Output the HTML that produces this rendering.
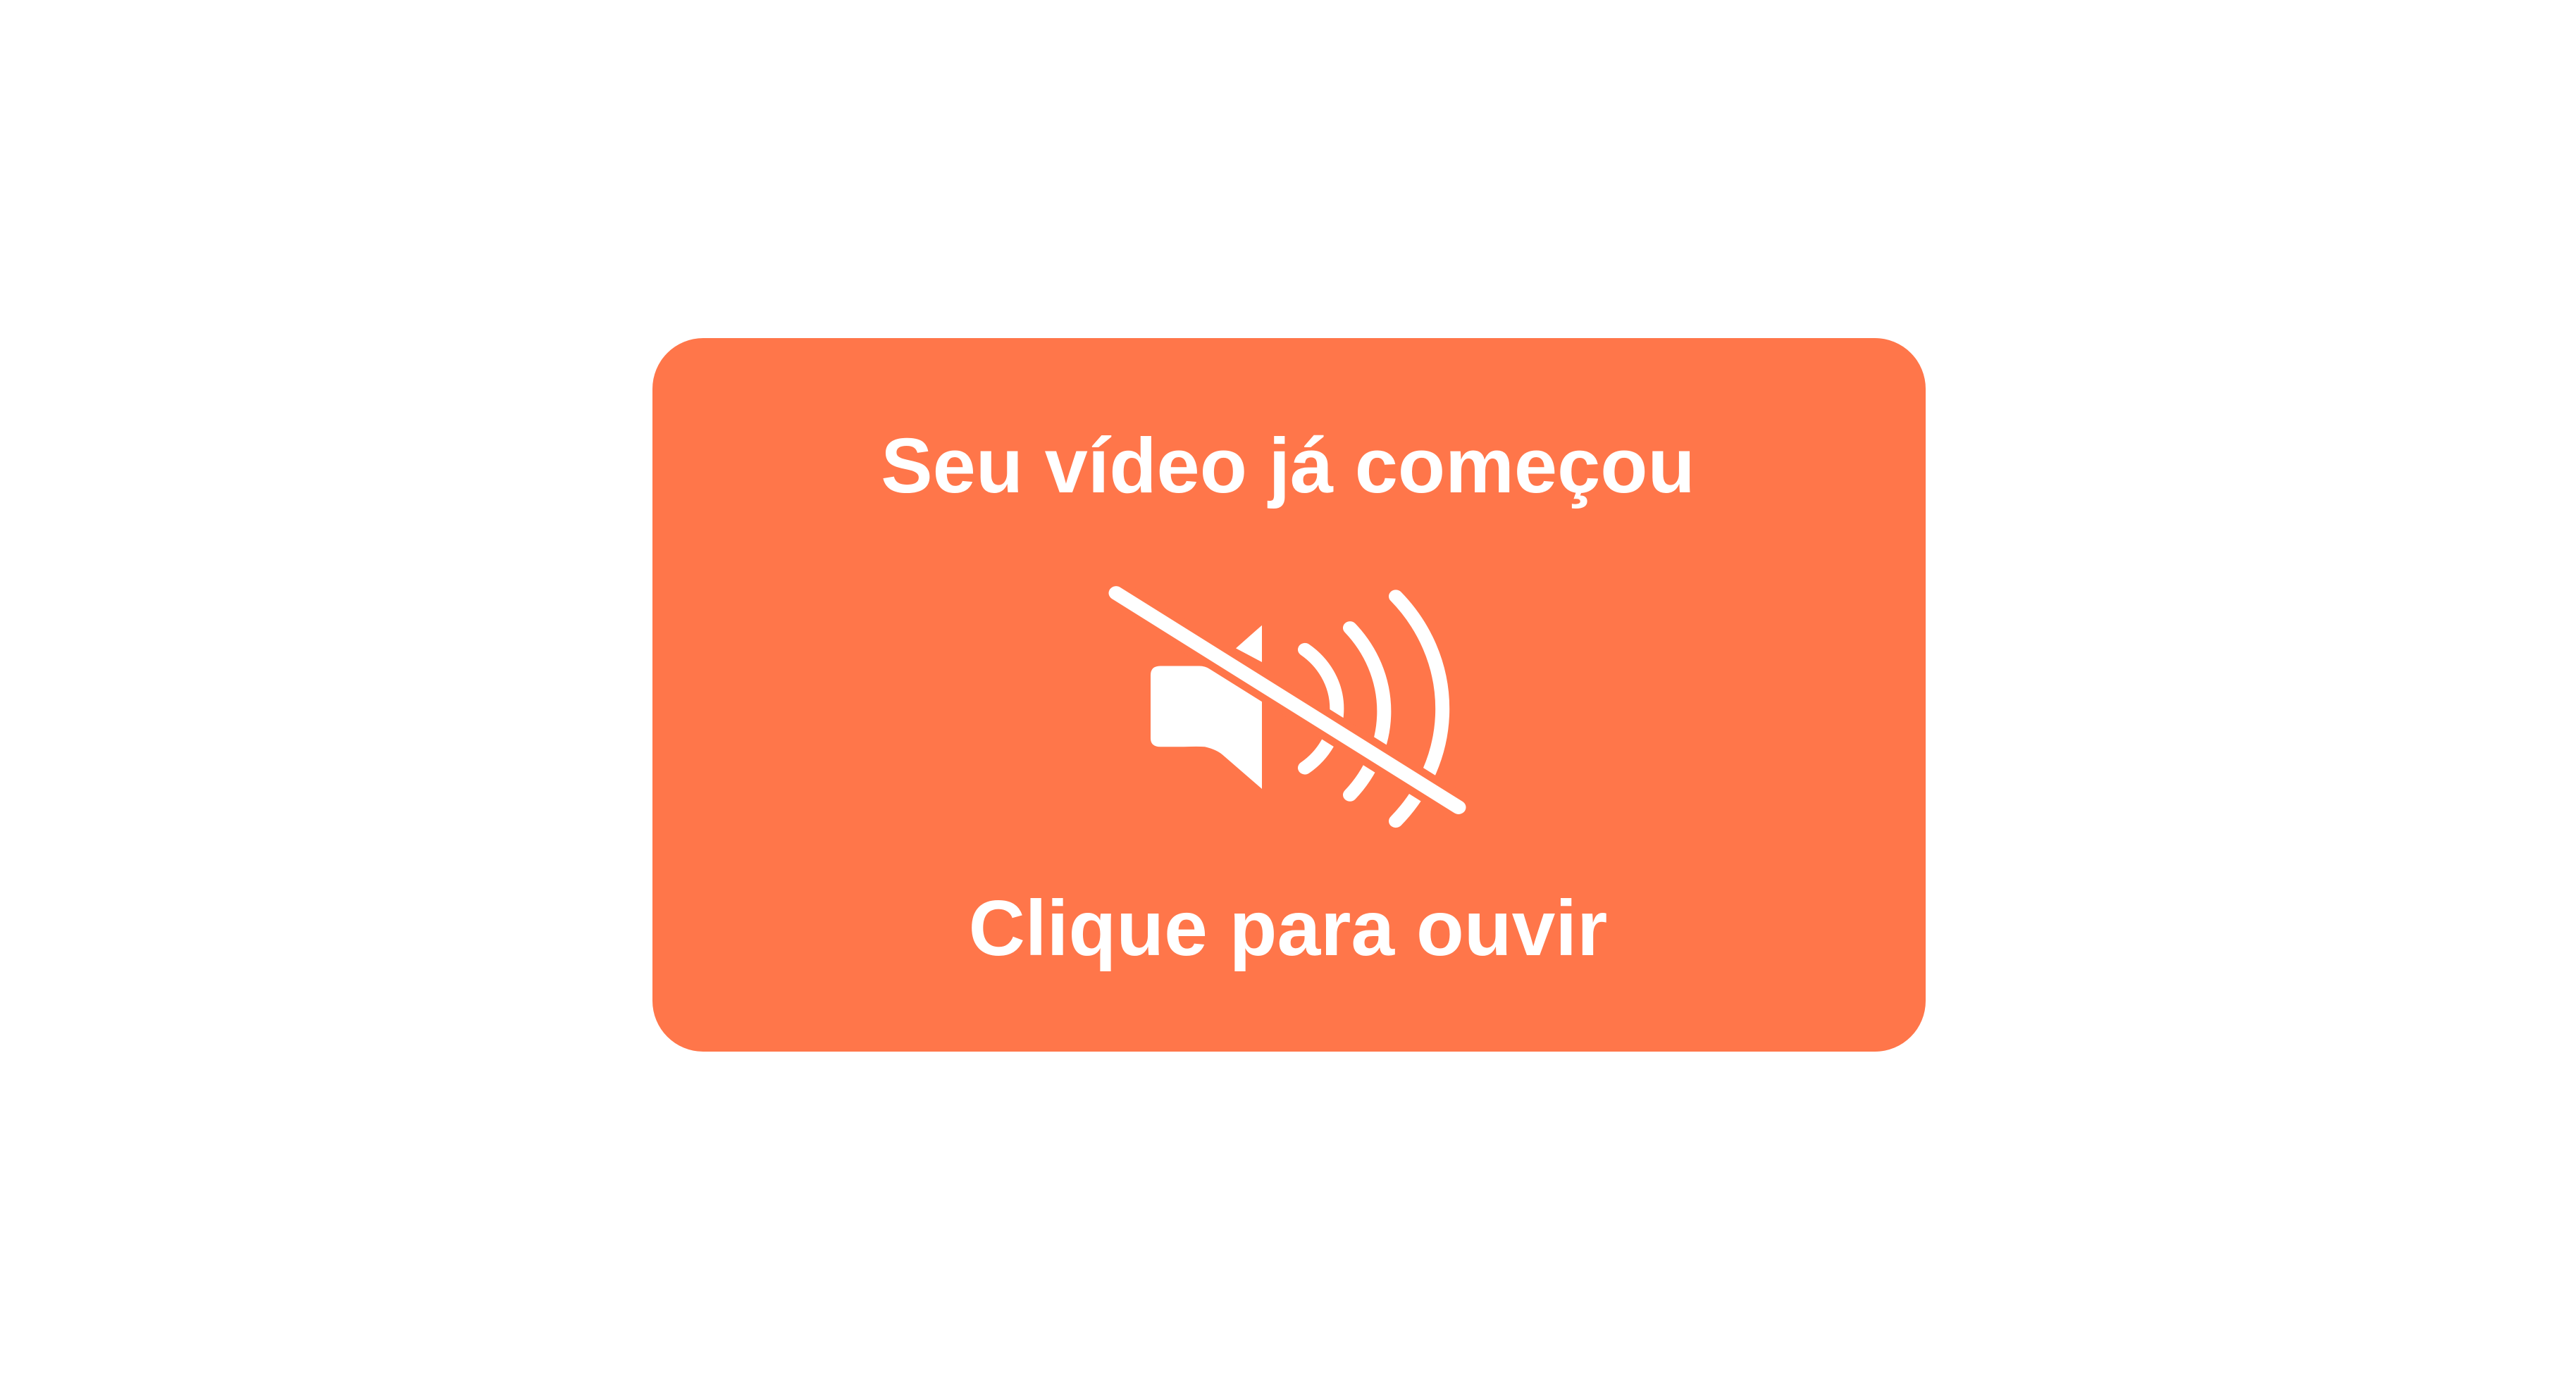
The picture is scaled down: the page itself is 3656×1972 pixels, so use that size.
<!DOCTYPE html>
<html><head><meta charset="utf-8"><style>
html,body{margin:0;padding:0;background:#fff;width:3656px;height:1972px;overflow:hidden}
.card{position:absolute;left:926px;top:480px;width:1807px;height:1013px;background:#FF764A;border-radius:72px}
.t{position:absolute;left:0;width:3656px;text-align:center;color:#fff;font-family:"Liberation Sans",Arial,sans-serif;font-weight:bold;line-height:1}
svg{position:absolute;left:1550px;top:800px}
</style></head><body>
<div class="card"></div>
<div class="t" style="top:607px;font-size:110px">Seu vídeo já começou</div>
<div class="t" style="top:1263px;font-size:111px">Clique para ouvir</div>
<svg width="560" height="400" viewBox="0 0 560 400">
<g transform="scale(1,0.933)">
<g fill="#fff">
<path d="M83 170 Q83 156 97 156 L152 156 Q160 156 168 161 L241 209 L241 343 L185 291 Q176 283 160 279 Q150 278 130 279 L97 279 Q83 279 83 266 Z"/>
<path d="M204 129 L241 94 L241 150 Z"/>
</g>
<g fill="none" stroke="#fff" stroke-width="20" stroke-linecap="round">
<path d="M302 131 A112 112 0 0 1 302 311"/>
<path d="M366 98 A191 191 0 0 1 366 352"/>
<path d="M431 50 A254 254 0 0 1 431 392"/>
</g>
<line x1="34" y1="45" x2="520" y2="371" stroke="#FF764A" stroke-width="44" stroke-linecap="butt"/>
<line x1="34" y1="45" x2="520" y2="371" stroke="#fff" stroke-width="21" stroke-linecap="round"/>
</g>
</svg>
</body></html>
